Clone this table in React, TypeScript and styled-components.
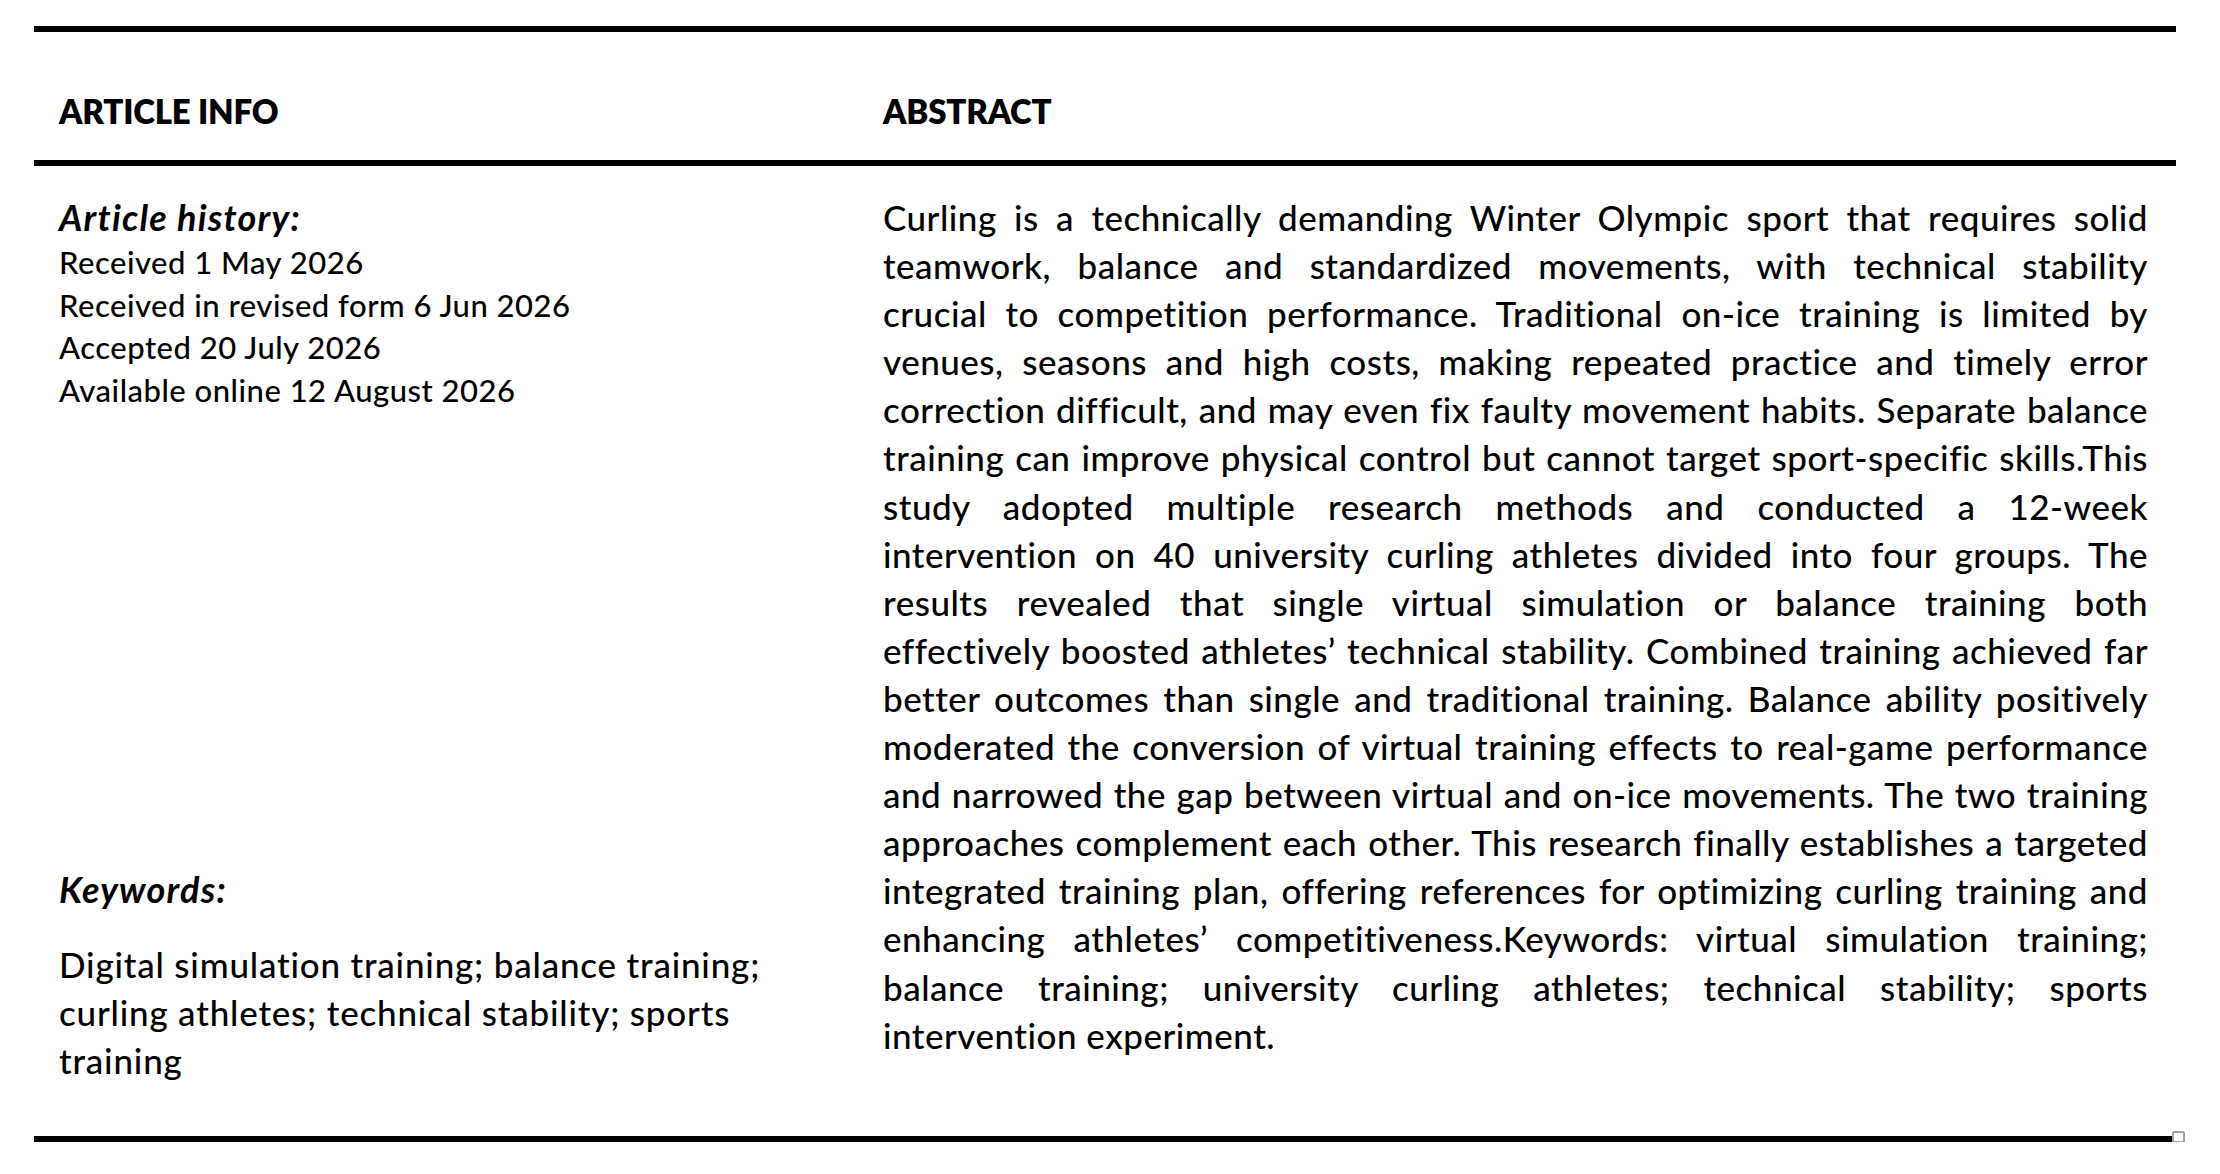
import styled, { createGlobalStyle } from "styled-components";

const GlobalStyle = createGlobalStyle`
  html, body {
    margin: 0;
    padding: 0;
    background: #fff;
  }
  body {
    font-family: Lato, "Open Sans", "Noto Sans", sans-serif;
    color: #000;
  }
`;

const history = [
  "Received 1 May 2026",
  "Received in revised form 6 Jun 2026",
  "Accepted 20 July 2026",
  "Available online 12 August 2026",
];

const keywords = [
  "Digital simulation training; balance training;",
  "curling athletes; technical stability; sports",
  "training",
];

// kept line by line so the justified block breaks where the reference does
const abstractLines = [
  "Curling is a technically demanding Winter Olympic sport that requires solid",
  "teamwork, balance and standardized movements, with technical stability",
  "crucial to competition performance. Traditional on-ice training is limited by",
  "venues, seasons and high costs, making repeated practice and timely error",
  "correction difficult, and may even fix faulty movement habits. Separate balance",
  "training can improve physical control but cannot target sport-specific skills.This",
  "study adopted multiple research methods and conducted a 12-week",
  "intervention on 40 university curling athletes divided into four groups. The",
  "results revealed that single virtual simulation or balance training both",
  "effectively boosted athletes\u2019 technical stability. Combined training achieved far",
  "better outcomes than single and traditional training. Balance ability positively",
  "moderated the conversion of virtual training effects to real-game performance",
  "and narrowed the gap between virtual and on-ice movements. The two training",
  "approaches complement each other. This research finally establishes a targeted",
  "integrated training plan, offering references for optimizing curling training and",
  "enhancing athletes\u2019 competitiveness.Keywords: virtual simulation training;",
  "balance training; university curling athletes; technical stability; sports",
  "intervention experiment.",
];

export default function App() {
  return (
    <>
      <GlobalStyle />
      <Page>
        <Table>
          <HeaderRow>
            <Heading>ARTICLE INFO</Heading>
            <Heading>ABSTRACT</Heading>
          </HeaderRow>
          <BodyRow>
            <InfoColumn>
              <Label>Article history:</Label>
              {history.map((h) => (
                <HistoryItem key={h}>{h}</HistoryItem>
              ))}
              <KeywordBlock>
                <Label>Keywords:</Label>
                <KeywordText>
                  {keywords.map((k) => (
                    <div key={k}>{k}</div>
                  ))}
                </KeywordText>
              </KeywordBlock>
            </InfoColumn>
            <Abstract>
              {abstractLines.map((line, i) => (
                <AbstractLine key={i} $last={i === abstractLines.length - 1}>
                  {line}
                </AbstractLine>
              ))}
            </Abstract>
          </BodyRow>
          <ResizeHandle />
        </Table>
      </Page>
    </>
  );
}

const Page = styled.div`
  padding: 26px 0 0 34px;
  width: 2220px;
  box-sizing: border-box;
`;

const Table = styled.div`
  position: relative;
  width: 2138px;
  border-bottom: 6px solid #000;
`;

const HeaderRow = styled.div`
  display: grid;
  grid-template-columns: 824px 1263px;
  padding: 55px 0 25px 25px;
  border-top: 6px solid #000;
  border-bottom: 6px solid #000;
  margin-right: -4px;
`;

const Heading = styled.div`
  font-size: 33px;
  line-height: 48px;
  font-weight: 800;
  letter-spacing: -0.2px;
`;

const BodyRow = styled.div`
  display: grid;
  grid-template-columns: 824px 1265px;
  padding: 27px 0 52px 25px;
`;

const InfoColumn = styled.div`
  display: flex;
  flex-direction: column;
`;

const Label = styled.div`
  font-size: 36px;
  line-height: 48px;
  font-weight: 700;
  font-style: italic;
  letter-spacing: 1.2px;
`;

const HistoryItem = styled.div`
  font-size: 31px;
  line-height: 42.5px;
  font-weight: 500;
  letter-spacing: 0.5px;
`;

const KeywordBlock = styled.div`
  margin-top: 454px;
`;

const KeywordText = styled.div`
  margin-top: 27px;
  font-size: 35px;
  line-height: 48px;
  font-weight: 500;
  letter-spacing: 0.8px;
`;

const Abstract = styled.div`
  font-size: 35px;
  line-height: 48.1px;
  font-weight: 500;
  letter-spacing: 0.5px;
`;

const AbstractLine = styled.div<{ $last?: boolean }>`
  white-space: nowrap;
  text-align: ${(p) => (p.$last ? "left" : "justify")};
  text-align-last: ${(p) => (p.$last ? "left" : "justify")};
`;

const ResizeHandle = styled.div`
  position: absolute;
  left: 100%;
  bottom: -7px;
  width: 9px;
  height: 8px;
  border: 2px solid #a0a0a0;
  border-radius: 2px;
  background: #fff;
`;
